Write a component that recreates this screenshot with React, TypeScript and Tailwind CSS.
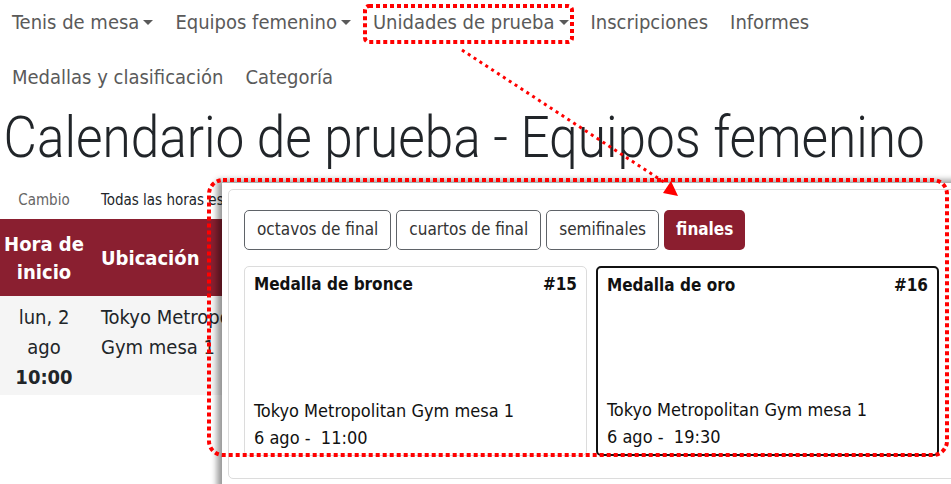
import type { ReactNode } from 'react';

const navRowOne = [
  { label: 'Tenis de mesa', dropdown: true },
  { label: 'Equipos femenino', dropdown: true },
  { label: 'Unidades de prueba', dropdown: true },
  { label: 'Inscripciones', dropdown: false },
  { label: 'Informes', dropdown: false },
];

const navRowTwo = [
  { label: 'Medallas y clasificación', dropdown: false },
  { label: 'Categoría', dropdown: false },
];

const phases = [
  { label: 'octavos de final', active: false },
  { label: 'cuartos de final', active: false },
  { label: 'semifinales', active: false },
  { label: 'finales', active: true },
];

const units = [
  { title: 'Medalla de bronce', code: '#15', venue: 'Tokyo Metropolitan Gym mesa 1', date: '6 ago -', time: '11:00', selected: false },
  { title: 'Medalla de oro', code: '#16', venue: 'Tokyo Metropolitan Gym mesa 1', date: '6 ago -', time: '19:30', selected: true },
];

function Caret() {
  return (
    <span className="ml-[4px] inline-block h-0 w-0 border-x-[5px] border-t-[5px] border-x-transparent border-t-[#5a5a5a] align-middle" />
  );
}

function NavItem({ label, dropdown }: { label: string; dropdown: boolean }) {
  return (
    <a className="flex items-center px-[11px] text-[20px] text-[#5a5a5a] first:pl-[12px]">
      {label}
      {dropdown ? <Caret /> : null}
    </a>
  );
}

function NavRow({ children, className }: { children: ReactNode; className?: string }) {
  return <div className={`flex h-[44px] items-center ${className ?? ''}`}>{children}</div>;
}

function Annotations() {
  return (
    <svg className="pointer-events-none absolute inset-0" width="951" height="484" viewBox="0 0 951 484">
      <g fill="none" stroke="#ff0000" strokeWidth="4" strokeDasharray="4 3">
        <rect x="365" y="6" width="207" height="36" rx="4" />
        <line x1="462" y1="50" x2="667" y2="184" strokeWidth="3" strokeDasharray="3 4" />
        <rect x="209" y="180" width="738" height="275" rx="14" />
      </g>
      <polygon points="678,196 663,193 671,181" fill="#ff0000" />
    </svg>
  );
}

function PhasePopup() {
  return (
    <div className="absolute left-[222px] top-[183px] h-[310px] w-[740px] bg-white p-[6px] shadow-[-5px_-3px_6px_rgba(0,0,0,0.4)]">
      <div className="h-[290px] rounded-[5px] border border-[#dcdcdc] pl-[15px] pt-[20px]">
        <div className="flex gap-[5px]">
          {phases.map((phase) => (
            <button
              key={phase.label}
              type="button"
              className={
                phase.active
                  ? 'h-[40px] rounded-[5px] bg-[#8b1e2f] px-[12px] text-[17px] font-bold text-white'
                  : 'h-[40px] rounded-[5px] border border-[#5f6368] bg-white px-[12px] text-[17px] text-[#333]'
              }
            >
              {phase.label}
            </button>
          ))}
        </div>
        <div className="mt-[16px] flex gap-[9px]">
          {units.map((unit) => (
            <div
              key={unit.code}
              className={`flex h-[190px] w-[343px] flex-col justify-between rounded-[5px] bg-white px-[9px] pb-[4px] pt-[4px] text-[18px] text-[#111] ${
                unit.selected ? 'border-2 border-[#111]' : 'border border-[#dcdcdc]'
              }`}
            >
              <div className="flex justify-between text-[17px] font-bold leading-[27px]">
                <span>{unit.title}</span>
                <span>{unit.code}</span>
              </div>
              <div className="leading-[27px]">
                <div>{unit.venue}</div>
                <div>
                  {unit.date}&nbsp; {unit.time}
                </div>
              </div>
            </div>
          ))}
        </div>
      </div>
    </div>
  );
}

export default function App() {
  return (
    <div className="relative h-[484px] w-[951px] overflow-hidden bg-white font-['DejaVu_Sans_Condensed','DejaVu_Sans',sans-serif]">
      <nav>
        <NavRow>
          {navRowOne.map((item) => (
            <NavItem key={item.label} {...item} />
          ))}
        </NavRow>
        <NavRow className="mt-[11px]">
          {navRowTwo.map((item) => (
            <NavItem key={item.label} {...item} />
          ))}
        </NavRow>
      </nav>

      <h1 className="mt-[8px] h-[62px] origin-left scale-x-[0.9] whitespace-nowrap pl-[4px] font-['Roboto',sans-serif] text-[57px] font-light leading-[62px] text-[#212529]">
        Calendario de prueba - Equipos femenino
      </h1>

      <div className="mt-[16px] flex h-[30px] items-center text-[15px]">
        <div className="w-[88px] text-center text-[#666]">Cambio</div>
        <div className="pl-[13px] text-[#212529]">Todas las horas están en hora local</div>
      </div>

      <div className="mt-[4px] w-[600px]">
        <div className="flex h-[77px] items-center bg-[#8a1f30] text-[20px] font-bold text-white">
          <div className="w-[88px] text-center leading-[28px]">
            Hora de
            <br />
            inicio
          </div>
          <div className="pl-[13px]">Ubicación</div>
        </div>
        <div className="flex h-[99px] items-start bg-[#f5f5f5] pt-[6px] text-[20px] leading-[30px] text-[#212529]">
          <div className="w-[88px] text-center">
            lun, 2
            <br />
            ago
            <br />
            <span className="font-bold">10:00</span>
          </div>
          <div className="pl-[13px]">
            Tokyo Metropolitan
            <br />
            Gym mesa 1
          </div>
        </div>
      </div>

      <PhasePopup />
      <Annotations />
    </div>
  );
}
